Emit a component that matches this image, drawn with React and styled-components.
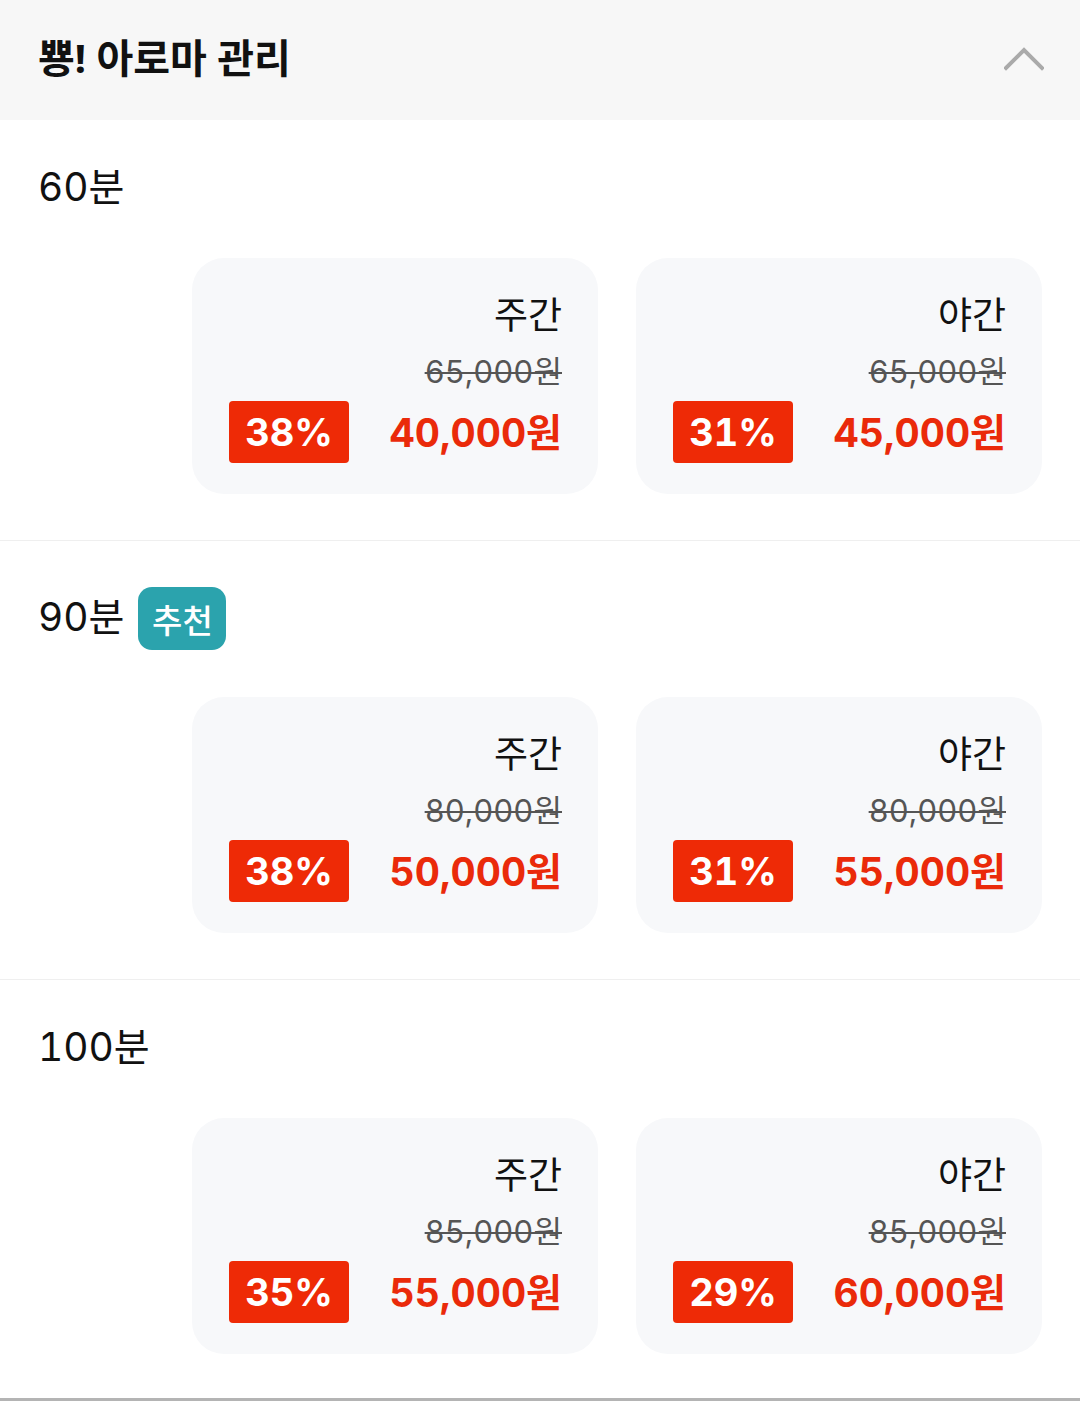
import React from "react";
import styled, { createGlobalStyle } from "styled-components";

const GlobalStyle = createGlobalStyle`
  body {
    margin: 0;
    background: #ffffff;
    font-family: Inter, "Noto Sans CJK KR", sans-serif;
    font-variant-numeric: tabular-nums;
    color: #111;
  }
`;

const Page = styled.div`
  width: 1080px;
`;

const Header = styled.div`
  height: 120px;
  box-sizing: border-box;
  padding: 0 36px 4px 38px;
  background: #f7f7f7;
  display: flex;
  align-items: center;
  justify-content: space-between;
`;

const Title = styled.h1`
  margin: 0;
  font-family: "Noto Sans", "Noto Sans CJK KR", sans-serif;
  font-size: 40px;
  font-weight: 700;
  line-height: 1;
  color: #111;
`;

const Section = styled.section`
  padding: 46px 38px ${(p) => (p.$last ? "44px" : "46px")};
  border-bottom: ${(p) => (p.$last ? "3px solid #b4b4b4" : "1px solid #efefef")};
`;

const DurationRow = styled.div`
  display: flex;
  align-items: center;
  gap: 14px;
  min-height: 45px;
  margin-bottom: 47px;
`;

const Duration = styled.span`
  font-size: 39px;
  line-height: 45px;
  color: #111;
  position: relative;
  top: -2px;
`;

const Recommend = styled.span`
  display: inline-flex;
  align-items: center;
  justify-content: center;
  width: 88px;
  height: 63px;
  border-radius: 14px;
  background: #2ba3ad;
  color: #fff;
  font-size: 33px;
  font-weight: 500;
`;

const CardGrid = styled.div`
  display: grid;
  grid-template-columns: 1fr 1fr;
  gap: 38px;
  padding-left: 154px;
`;

const Card = styled.div`
  height: 236px;
  box-sizing: border-box;
  padding: 34px 36px 30px 37px;
  border-radius: 32px;
  background: #f7f8fa;
  display: flex;
  flex-direction: column;
  align-items: flex-end;
`;

const Label = styled.div`
  font-size: 37px;
  line-height: 48px;
  color: #111;
`;

const Original = styled.div`
  margin-top: 8px;
  font-size: 31px;
  line-height: 48px;
  color: #555;
  text-decoration: line-through;
  text-decoration-thickness: 2px;
`;

const PriceRow = styled.div`
  margin-top: 5px;
  width: 100%;
  display: flex;
  align-items: center;
  justify-content: space-between;
`;

const Discount = styled.span`
  display: inline-flex;
  align-items: center;
  justify-content: center;
  width: 120px;
  height: 62px;
  border-radius: 4px;
  background: #ee2a06;
  color: #fff;
  font-size: 38px;
  font-weight: 700;
`;

const Price = styled.span`
  font-size: 39px;
  font-weight: 700;
  color: #ea2a0a;
  position: relative;
  top: -2px;
`;

const Chevron = () => (
  <svg width="40" height="26" viewBox="0 0 40 26" fill="none">
    <polyline
      points="2,23 20,5 38,23"
      stroke="#aaaaaa"
      strokeWidth="4"
      strokeLinecap="square"
      strokeLinejoin="miter"
    />
  </svg>
);

const plans = [
  {
    duration: "60분",
    items: [
      { label: "주간", original: "65,000원", rate: "38%", price: "40,000원" },
      { label: "야간", original: "65,000원", rate: "31%", price: "45,000원" },
    ],
  },
  {
    duration: "90분",
    recommend: true,
    items: [
      { label: "주간", original: "80,000원", rate: "38%", price: "50,000원" },
      { label: "야간", original: "80,000원", rate: "31%", price: "55,000원" },
    ],
  },
  {
    duration: "100분",
    items: [
      { label: "주간", original: "85,000원", rate: "35%", price: "55,000원" },
      { label: "야간", original: "85,000원", rate: "29%", price: "60,000원" },
    ],
  },
];

export default function App() {
  return (
    <Page>
      <GlobalStyle />
      <Header>
        <Title>뿅! 아로마 관리</Title>
        <Chevron />
      </Header>
      {plans.map((plan, i) => (
        <Section key={plan.duration} $last={i === plans.length - 1}>
          <DurationRow>
            <Duration>{plan.duration}</Duration>
            {plan.recommend && <Recommend>추천</Recommend>}
          </DurationRow>
          <CardGrid>
            {plan.items.map((item) => (
              <Card key={item.label}>
                <Label>{item.label}</Label>
                <Original>{item.original}</Original>
                <PriceRow>
                  <Discount>{item.rate}</Discount>
                  <Price>{item.price}</Price>
                </PriceRow>
              </Card>
            ))}
          </CardGrid>
        </Section>
      ))}
    </Page>
  );
}
